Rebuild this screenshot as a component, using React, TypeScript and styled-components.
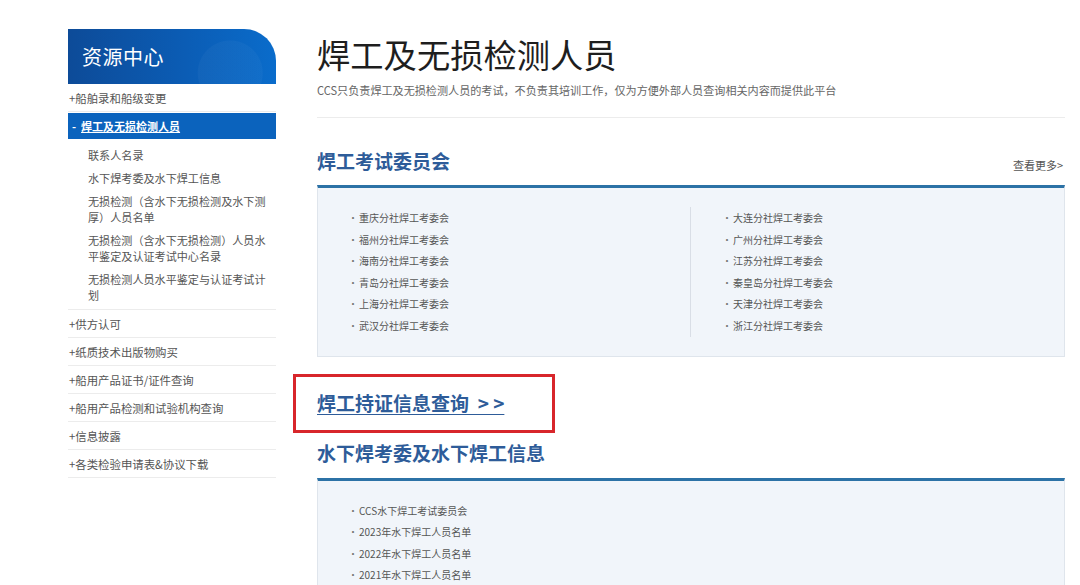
import React from "react";
import styled, { createGlobalStyle } from "styled-components";

const Global = createGlobalStyle`
  html, body { margin: 0; padding: 0; background: #fff; }
  body { font-family: "Noto Sans CJK SC", "Noto Sans", sans-serif; color: #333; }
  * { box-sizing: border-box; }
`;

const Page = styled.div`
  display: flex;
  align-items: flex-start;
  padding: 29px 0 0 68px;
  width: 1080px;
  height: 585px;
  overflow: hidden;
`;

const Sidebar = styled.aside`
  width: 208px;
  flex: none;
`;

const SideHeader = styled.div`
  height: 55px;
  border-top-right-radius: 32px;
  background:
    radial-gradient(circle at 78% 80%, rgba(255,255,255,0.03) 0 32px, transparent 33px),
    linear-gradient(90deg, #0d4b98 0%, #0b5cb4 55%, #0a6ccb 100%);
  color: #fff;
  font-size: 20px;
  line-height: 55px;
  padding-left: 14px;
  letter-spacing: 0.5px;
`;

const NavItem = styled.div<{ $active?: boolean }>`
  height: ${(p) => (p.$active ? "26px" : "28px")};
  display: flex;
  align-items: center;
  padding-left: ${(p) => (p.$active ? "4px" : "1px")};
  font-size: ${(p) => (p.$active ? "11px" : "11.4px")};
  font-weight: ${(p) => (p.$active ? 700 : 400)};
  color: ${(p) => (p.$active ? "#fff" : "#555")};
  background: ${(p) => (p.$active ? "#0b63bd" : "transparent")};
  border-bottom: ${(p) => (p.$active ? "none" : "1px solid #ececec")};
  margin-top: ${(p) => (p.$active ? "1px" : "0")};
  white-space: nowrap;
`;

const ActiveLabel = styled.span`
  text-decoration: underline;
  margin-left: 5px;
`;

const SubList = styled.ul`
  list-style: none;
  margin: 0;
  padding: 8px 6px 6px 20px;
  display: flex;
  flex-direction: column;
  gap: 7px;
  border-bottom: 1px solid #ececec;
`;

const SubItem = styled.li`
  font-size: 11.1px;
  line-height: 16px;
  color: #555;
`;

const Main = styled.main`
  margin-left: 41px;
  width: 748px;
  flex: none;
`;

const Title = styled.h1`
  margin: 4px 0 0;
  font-size: 33.3px;
  line-height: 42px;
  font-weight: 400;
  color: #1e1e1e;
`;

const Subtitle = styled.p`
  margin: 7px 0 0;
  font-size: 11.1px;
  line-height: 16px;
  color: #666;
`;

const Divider = styled.hr`
  margin: 19px 0 0;
  border: none;
  border-top: 1px solid #ececec;
`;

const SectionHead = styled.div<{ $top: number }>`
  display: flex;
  justify-content: space-between;
  align-items: flex-end;
  margin-top: ${(p) => p.$top}px;
`;

const SectionTitle = styled.h2`
  margin: 0;
  font-size: 19px;
  line-height: 24px;
  font-weight: 700;
  color: #2e5c99;
`;

const More = styled.span`
  font-size: 11px;
  color: #555;
  line-height: 16px;
  padding-right: 2px;
`;

const Box = styled.div<{ $top: number }>`
  margin-top: ${(p) => p.$top}px;
  background: #f1f5fa;
  border: 1px solid #dfe5ec;
  border-top: 3px solid #2c72a6;
  display: grid;
  grid-template-columns: 1fr 1fr;
  padding: 19px 0 19px;
`;

const Column = styled.ul<{ $divider?: boolean; $pad: number }>`
  list-style: none;
  margin: 0;
  padding: 0 0 0 ${(p) => p.$pad}px;
  border-right: ${(p) => (p.$divider ? "1px solid #d9dee6" : "none")};
`;

const Item = styled.li`
  font-size: 10px;
  line-height: 21.6px;
  color: #555;
  white-space: nowrap;
  &::before {
    content: "·";
    margin-right: 1px;
    color: #777;
  }
`;

const Callout = styled.div`
  margin: 17px 0 0 -24px;
  width: 262px;
  height: 59px;
  border: 3px solid #d8262b;
  display: flex;
  align-items: center;
  padding: 0 0 0 21px;
`;

const CalloutLink = styled.a`
  font-size: 19px;
  font-weight: 700;
  color: #2e5c99;
  text-decoration: underline;
  text-underline-offset: 3px;
  line-height: 24px;
  white-space: pre;
`;

const leftCol = [
  "重庆分社焊工考委会",
  "福州分社焊工考委会",
  "海南分社焊工考委会",
  "青岛分社焊工考委会",
  "上海分社焊工考委会",
  "武汉分社焊工考委会",
];
const rightCol = [
  "大连分社焊工考委会",
  "广州分社焊工考委会",
  "江苏分社焊工考委会",
  "秦皇岛分社焊工考委会",
  "天津分社焊工考委会",
  "浙江分社焊工考委会",
];
const underwater = [
  "CCS水下焊工考试委员会",
  "2023年水下焊工人员名单",
  "2022年水下焊工人员名单",
  "2021年水下焊工人员名单",
];

const subItems = [
  "联系人名录",
  "水下焊考委及水下焊工信息",
  "无损检测（含水下无损检测及水下测厚）人员名单",
  "无损检测（含水下无损检测）人员水平鉴定及认证考试中心名录",
  "无损检测人员水平鉴定与认证考试计划",
];

const navAfter = [
  "+供方认可",
  "+纸质技术出版物购买",
  "+船用产品证书/证件查询",
  "+船用产品检测和试验机构查询",
  "+信息披露",
  "+各类检验申请表&协议下载",
];

export default function App() {
  return (
    <>
      <Global />
      <Page>
        <Sidebar>
          <SideHeader>资源中心</SideHeader>
          <NavItem>+船舶录和船级变更</NavItem>
          <NavItem $active>
            -<ActiveLabel>焊工及无损检测人员</ActiveLabel>
          </NavItem>
          <SubList>
            {subItems.map((s) => (
              <SubItem key={s}>{s}</SubItem>
            ))}
          </SubList>
          {navAfter.map((n) => (
            <NavItem key={n}>{n}</NavItem>
          ))}
        </Sidebar>
        <Main>
          <Title>焊工及无损检测人员</Title>
          <Subtitle>
            CCS只负责焊工及无损检测人员的考试，不负责其培训工作，仅为方便外部人员查询相关内容而提供此平台
          </Subtitle>
          <Divider />
          <SectionHead $top={31}>
            <SectionTitle>焊工考试委员会</SectionTitle>
            <More>查看更多&gt;</More>
          </SectionHead>
          <Box $top={12}>
            <Column $divider $pad={30}>
              {leftCol.map((t) => (
                <Item key={t}>{t}</Item>
              ))}
            </Column>
            <Column $pad={31}>
              {rightCol.map((t) => (
                <Item key={t}>{t}</Item>
              ))}
            </Column>
          </Box>
          <Callout>
            <CalloutLink href="#">{"焊工持证信息查询  > >"}</CalloutLink>
          </Callout>
          <SectionHead $top={8}>
            <SectionTitle>水下焊考委及水下焊工信息</SectionTitle>
          </SectionHead>
          <Box $top={13}>
            <Column $pad={30}>
              {underwater.map((t) => (
                <Item key={t}>{t}</Item>
              ))}
            </Column>
          </Box>
        </Main>
      </Page>
    </>
  );
}
